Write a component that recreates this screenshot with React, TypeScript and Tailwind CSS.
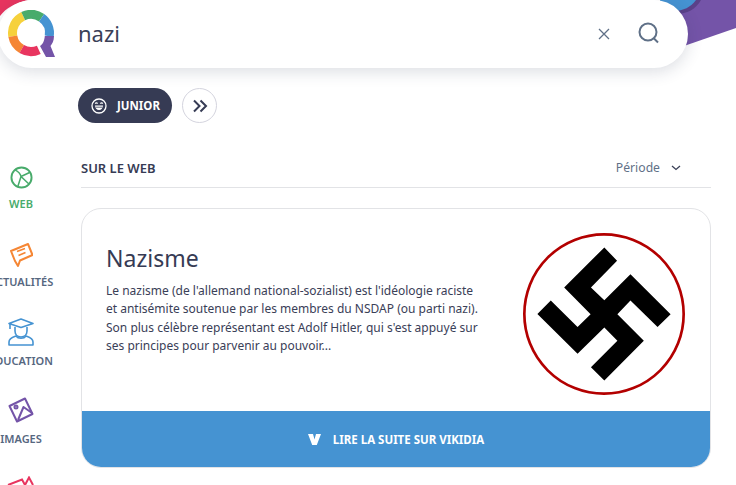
const font = "font-['Noto_Sans','Liberation_Sans',sans-serif]";

function Logo() {
  return (
    <svg width="48" height="48" viewBox="0 0 48 48" className="shrink-0" fill="none" strokeWidth="9">
      <path d="M4.8 26.2 A18.5 18.5 0 0 1 15.2 6.2" stroke="#f6d13c" />
      <path d="M15.2 6.2 A18.5 18.5 0 0 1 33.6 7.8" stroke="#48ab6b" />
      <path d="M33.6 7.8 A18.5 18.5 0 0 1 41.2 26.2" stroke="#4593d2" />
      <path d="M4.8 26.2 A18.5 18.5 0 0 0 13.75 39" stroke="#f58634" />
      <path d="M13.75 39 A18.5 18.5 0 0 0 30.8 39.8" stroke="#e8355f" />
      <path d="M36.8 26 L46 26 C46 31 44 34 42.5 36 L47 47 L38 47 L32 36 C35 34.5 36.5 30 36.8 26 Z" fill="#7454a8" stroke="none" />
    </svg>
  );
}

function Side({ label, color, iconClass, children }: { label: string; color: string; iconClass?: string; children: React.ReactNode }) {
  return (
    <div className="flex h-[78.67px] flex-col items-center">
      <div className={`flex h-[29px] items-end ${iconClass ?? ""}`}>{children}</div>
      <span className={`mt-[6.5px] whitespace-nowrap text-[11px] leading-[15px] font-semibold ${color}`}>{label}</span>
    </div>
  );
}

export default function App() {
  return (
    <div className={`relative h-[485px] w-[736px] overflow-hidden bg-white ${font}`}>
      <svg className="absolute left-0 top-0" width="736" height="60" viewBox="0 0 736 60">
        <path d="M0 0 H28 C15 3 6 8 0 16 Z" fill="#e8355f" />
        <path d="M660 0 H736 V28 L684 46 L660 46 Z" fill="#7454a8" />
        <path d="M660 0 H701 C696 9 687 14 676 14 L660 14 Z" fill="#5a4189" />
        <path d="M660 0 H696 C691 7 683 11 674 11 L660 11 Z" fill="#4593d2" />
      </svg>
      <div className="relative -ml-[2px] flex h-[68px] w-[690px] items-center rounded-[34px] bg-white pl-[80px] pr-[28px] shadow-[0_4px_16px_rgba(40,50,80,0.16)]">
        <div className="absolute left-[10px] top-[10px]"><Logo /></div>
        <span className="-mt-[2px] flex-1 text-[22px] leading-[30px] text-[#3a4057]">nazi</span>
        <svg width="12" height="12" viewBox="0 0 12 12" className="mr-[28px]" fill="none" stroke="#5f7087" strokeWidth="1.3"><path d="M1 1 L11 11 M11 1 L1 11" /></svg>
        <svg width="22" height="22" viewBox="0 0 22 22" className="-mt-[2px]" fill="none" stroke="#5f7087" strokeWidth="2"><circle cx="10" cy="10" r="8.5" /><path d="M15.5 16 L20 20.5" /></svg>
      </div>
      <div className="ml-[78px] mt-[20px] flex items-center gap-[10px]">
        <div className="flex h-[35px] w-[94px] items-center rounded-full bg-[#363b54] pl-[13px] text-white">
          <svg width="16" height="16" viewBox="0 0 16 16" fill="none" stroke="white" strokeWidth="1.3">
            <circle cx="8" cy="8" r="7" />
            <path d="M4 7.5 H12 C12 10 10.3 12 8 12 C5.7 12 4 10 4 7.5 Z" fill="white" stroke="none" />
            <path d="M4.4 9.2 H11.6" stroke="#363b54" strokeWidth="0.8" />
            <path d="M4.2 5.6 C4.8 4.6 6 4.6 6.6 5.6 M9.4 5.6 C10 4.6 11.2 4.6 11.8 5.6" strokeWidth="1.1" />
          </svg>
          <span className="ml-[10px] text-[11.5px] font-bold leading-[15px]">JUNIOR</span>
        </div>
        <div className="flex h-[35px] w-[35px] items-center justify-center rounded-full border border-[#d4d4de] bg-white">
          <svg width="16" height="14" viewBox="0 0 16 14" fill="none" stroke="#363b54" strokeWidth="2"><path d="M2 1.5 L7.5 7 L2 12.5 M8.5 1.5 L14 7 L8.5 12.5" /></svg>
        </div>
      </div>
      <div className="flex">
        <nav className="-ml-[4px] mt-[37px] flex w-[50px] flex-col items-center">
          <Side label="WEB" color="text-[#48ab6b]">
            <svg width="23" height="23" viewBox="0 0 24 24" fill="none" stroke="#48ab6b" strokeWidth="2">
              <circle cx="12" cy="12" r="10.5" />
              <path d="M5 4 C9 6 11 8 11.5 11 M11.5 11 L8 22 M11.5 11 L21 6.5 M11.5 11 L20 19" strokeWidth="1.6" />
            </svg>
          </Side>
          <Side label="ACTUALITÉS" color="text-[#56677f]">
            <svg width="24" height="26" viewBox="0 0 24 26" fill="none" stroke="#f58634" strokeWidth="2" strokeLinejoin="round">
              <path d="M2 9 L19 2 L23.5 13 L11 18.5 L9 24 L6 19 Z" />
              <path d="M8 9.5 L16 6.5 M9.5 13.5 L16.5 10.5" strokeWidth="1.6" />
            </svg>
          </Side>
          <Side label="ÉDUCATION" color="text-[#56677f]">
            <svg width="26" height="28" viewBox="0 0 26 28" fill="none" stroke="#4593d2" strokeWidth="1.6" strokeLinejoin="round">
              <path d="M13 1 L25 5.5 L13 9.5 L1 5.5 Z" />
              <path d="M2 6 V11 M7 9 V13 C7 21 19 21 19 13 V9" />
              <path d="M1 27 V24 C1 20 5 19 8 18 C10 21 16 21 18 18 C21 19 25 20 25 24 V27 Z" />
            </svg>
          </Side>
          <Side label="IMAGES" color="text-[#56677f]" iconClass="-translate-y-[2px]">
            <svg width="26" height="26" viewBox="0 0 26 26" fill="none" stroke="#7454a8" strokeWidth="2" strokeLinejoin="round">
              <path d="M1.5 9 L17 1.5 L24.5 17 L9 24.5 Z" />
              <circle cx="8" cy="10" r="1.5" />
              <path d="M10 23 L15.5 10 L24 16" />
            </svg>
          </Side>
          <svg width="28" height="10" viewBox="0 0 28 10" className="mt-[1.3px]" fill="none" stroke="#e8355f" strokeWidth="2"><path d="M1 9 L15 3.5 L18 9 L22 1.5 L26 9" /></svg>
        </nav>
        <main className="ml-[35px] mt-[30px] w-[630px]">
          <div className="flex h-[35px] items-start justify-between border-b border-[#e2e3e6] pr-[30px] pt-[5px]">
            <span className="text-[13px] font-semibold leading-[20px] text-[#363b54]">SUR LE WEB</span>
            <div className="flex items-center gap-[11px] text-[#5f7087]">
              <span className="text-[12.2px] leading-[20px]">Période</span>
              <svg width="10" height="6" viewBox="0 0 10 6" fill="none" stroke="#3a4057" strokeWidth="1.3"><path d="M1 1 L5 4.5 L9 1" /></svg>
            </div>
          </div>
          <article className="mt-[20px] h-[260px] overflow-hidden rounded-[20px] border border-[#e2e3e6]">
            <div className="flex h-[202px]">
              <div className="w-[372px] ml-[24px] pt-[34px] shrink-0">
                <h2 className="text-[23px] font-normal leading-[30px] text-[#363b54]">Nazisme</h2>
                <p className="mt-[9px] text-[12px] leading-[18.33px] text-[#3a4057]">
                  Le nazisme (de l'allemand national-sozialist) est l'idéologie raciste et antisémite soutenue par les membres du NSDAP (ou parti nazi). Son plus célèbre représentant est Adolf Hitler, qui s'est appuyé sur ses principes pour parvenir au pouvoir...
                </p>
              </div>
              <svg width="162" height="162" viewBox="72 39 484 484" className="ml-[45px] mt-[24px]">
                <circle cx="314" cy="281" r="238" fill="white" stroke="#b30000" strokeWidth="8" />
                <path d="M315 82 L353 122 L275 202 L315 240 L393 162 L513 282 L474 320 L393 241 L354 282 L433 361 L315 480 L275 440 L354 361 L315 321 L235 400 L115 281 L155 241 L235 320 L274 282 L195 202 Z" fill="black" />
              </svg>
            </div>
            <div className="flex h-[56px] items-center justify-center bg-[#4593d2] text-white">
              <svg width="13" height="11" viewBox="0 0 13 11" fill="white" className="mr-[12px]"><path d="M0 0 H5 L6.5 5.5 L8 0 H13 L8.8 11 H4.2 Z" /></svg>
              <span className="text-[11.5px] font-bold leading-[15px]">LIRE LA SUITE SUR VIKIDIA</span>
            </div>
          </article>
        </main>
      </div>
    </div>
  );
}
